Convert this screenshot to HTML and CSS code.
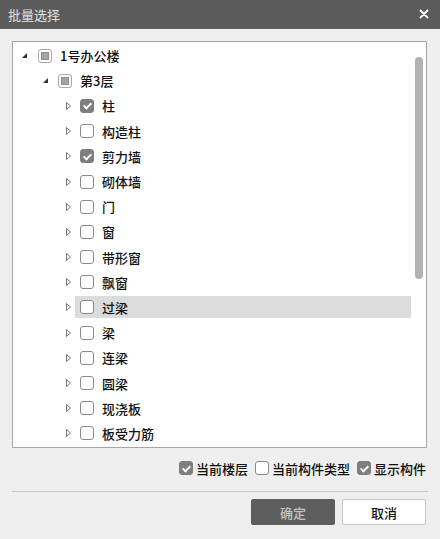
FILE: index.html
```html
<!DOCTYPE html>
<html lang="zh-CN">
<head>
  <meta charset="UTF-8" />
  <title>批量选择</title>
  <link rel="stylesheet" href="styles.css">
</head>
<body>
  <div class="dialog">
    <div class="titlebar">
      <span class="title">批量选择</span>
      <svg class="close" width="10" height="10" viewBox="0 0 10 10">
        <path d="M1.5 1.5 L8.5 8.5 M8.5 1.5 L1.5 8.5" stroke="#fff" stroke-width="1.8" stroke-linecap="round"/>
      </svg>
    </div>

    <div class="content">
      <div class="tree">
        <ul class="rows">
          <li class="row lv0">
            <svg class="toggle" width="17" height="10" viewBox="0 0 17 10"><polygon points="6,2 6,7 1,7" fill="#333"/></svg>
            <div class="node"><span class="cb part"></span><span class="label">1号办公楼</span></div>
          </li>
          <li class="row lv1">
            <svg class="toggle" width="16" height="10" viewBox="0 0 16 10"><polygon points="6,2 6,7 1,7" fill="#333"/></svg>
            <div class="node"><span class="cb part"></span><span class="label">第3层</span></div>
          </li>
        </ul>
        <ul class="rows" id="items"></ul>
        <div class="scrollbar"></div>
      </div>

      <div class="options">
        <label class="opt"><span class="cb on"></span>当前楼层</label>
        <label class="opt"><span class="cb"></span>当前构件类型</label>
        <label class="opt"><span class="cb on"></span>显示构件</label>
      </div>

      <div class="sep"></div>

      <div class="actions">
        <button class="btn primary">确定</button>
        <button class="btn">取消</button>
      </div>
    </div>
  </div>

  <script>
    const items = [
      ['柱', true], ['构造柱', false], ['剪力墙', true], ['砌体墙', false],
      ['门', false], ['窗', false], ['带形窗', false], ['飘窗', false],
      ['过梁', false, true], ['梁', false], ['连梁', false], ['圆梁', false],
      ['现浇板', false], ['板受力筋', false]
    ];
    const list = document.getElementById('items');
    items.forEach(([name, checked, selected]) => {
      const li = document.createElement('li');
      li.className = 'row lv2';
      li.innerHTML =
        '<svg class="toggle" width="12" height="10" viewBox="0 0 12 10"><polygon points="3.5,1.5 7.5,5 3.5,8.5" fill="none" stroke="#777" stroke-width="1"/></svg>' +
        '<div class="node' + (selected ? ' selected' : '') + '">' +
        '<span class="cb' + (checked ? ' on' : '') + '"></span>' +
        '<span class="label">' + name + '</span></div>';
      list.appendChild(li);
    });
  </script>
</body>
</html>
```

FILE: styles.css
```css
body {
  margin: 0;
  font-family: "Noto Sans CJK SC", "Noto Sans", sans-serif;
  font-size: 13px;
  font-weight: 500;
  color: #111;
  background: #efefef;
}
.dialog {
  width: 440px;
  height: 539px;
  background: #efefef;
  overflow: hidden;
}
.titlebar {
  height: 29px;
  background: #5b5b5b;
  display: flex;
  align-items: center;
  justify-content: space-between;
  padding: 0 11px 0 8px;
}
.title {
  color: #e2e2e2;
  font-size: 13px;
  font-weight: 400;
}
.close {
  margin-top: -1px;
}
.content {
  padding: 12px 13px 0 12px;
}
.tree {
  position: relative;
  height: 405px;
  background: #fff;
  border: 1px solid #a6a6a6;
  overflow: hidden;
}
.rows {
  list-style: none;
  margin: 0;
  padding: 0;
}
.rows:first-child {
  padding-top: 1px;
}
.row {
  height: 25.2px;
  display: flex;
  align-items: center;
}
.lv0 { padding-left: 8px; }
.lv1 { padding-left: 29px; }
.lv2 { padding-left: 50px; }
.toggle {
  flex: none;
}
.node {
  display: flex;
  align-items: center;
  gap: 8px;
  height: 22px;
}
.lv2 .node {
  flex: 1;
  padding-left: 5px;
  margin-right: 15px;
}
.node.selected {
  background: #dcdcdc;
}
.cb {
  box-sizing: border-box;
  width: 14px;
  height: 14px;
  border: 1px solid #8a8a8a;
  border-radius: 3px;
  background: #fff;
  flex: none;
  position: relative;
}
.cb.on {
  background: #7e7e7e;
  border-color: #7e7e7e;
}
.cb.on::after {
  content: "";
  position: absolute;
  left: 4px;
  top: 1.5px;
  width: 3px;
  height: 6px;
  border: solid #fff;
  border-width: 0 2px 2px 0;
  transform: rotate(45deg);
}
.cb.part {
  border-color: #a8a8a8;
}
.cb.part::after {
  content: "";
  position: absolute;
  left: 2px;
  top: 2px;
  width: 8px;
  height: 8px;
  border-radius: 1px;
  background: #a4a4a4;
  box-shadow: inset 0 0 0 1px #8e8e8e;
}
.scrollbar {
  position: absolute;
  top: 15px;
  right: 3px;
  width: 8px;
  height: 222px;
  border-radius: 4px;
  background: #b2b2b2;
}
.options {
  display: flex;
  justify-content: flex-end;
  align-items: center;
  height: 20px;
  margin-top: 10px;
  padding-right: 1px;
}
.opt {
  display: flex;
  align-items: center;
  gap: 3px;
  margin-left: 7px;
}
.sep {
  height: 1px;
  background: #c6c6c6;
  margin-top: 13px;
  margin-right: -1px;
}
.actions {
  display: flex;
  justify-content: flex-end;
  gap: 7px;
  margin-top: 7px;
  padding-right: 1px;
}
.btn {
  width: 84px;
  height: 26px;
  font-family: inherit;
  font-size: 13px;
  font-weight: 500;
  border: 1px solid #c8c8c8;
  border-radius: 2px;
  background: #fff;
  color: #111;
  padding: 0;
}
.btn.primary {
  background: #5e5e5e;
  border-color: #5e5e5e;
  color: #c4c4c4;
}
```
